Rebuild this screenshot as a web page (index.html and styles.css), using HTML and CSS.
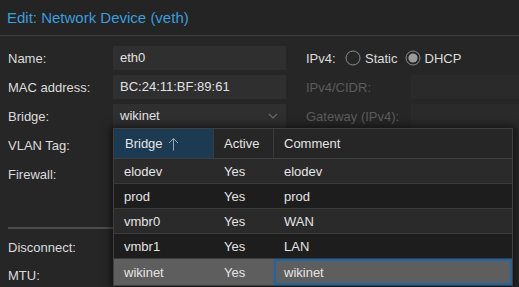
FILE: index.html
```html
<!DOCTYPE html>
<html>
<head>
<meta charset="utf-8">
<link rel="stylesheet" href="styles.css">
</head>
<body>
<div class="dialog">
  <div class="header"><span class="title">Edit: Network Device (veth)</span></div>
  <div class="form">
    <div class="col left">
      <div class="row"><span class="label">Name:</span><span class="field">eth0</span></div>
      <div class="row"><span class="label">MAC address:</span><span class="field">BC:24:11:BF:89:61</span></div>
      <div class="row"><span class="label">Bridge:</span><span class="field combo">wikinet<svg class="chev" width="10" height="6" viewBox="0 0 10 6"><polyline points="1,1 5,5 9,1" fill="none" stroke="#6a6a6a" stroke-width="1.2"/></svg></span></div>
      <div class="row"><span class="label">VLAN Tag:</span><span class="field"></span></div>
      <div class="row"><span class="label">Firewall:</span></div>
      <div class="spacer"></div>
      <div class="sep"></div>
      <div class="row r-disc"><span class="label">Disconnect:</span></div>
      <div class="row r-mtu"><span class="label">MTU:</span></div>
    </div>
    <div class="col right">
      <div class="row">
        <span class="label short">IPv4:</span>
        <span class="radio"><svg width="16" height="16" viewBox="0 0 16 16"><circle cx="8" cy="8" r="7" fill="none" stroke="#8a8a8a" stroke-width="1"/></svg>Static</span>
        <span class="radio"><svg width="16" height="16" viewBox="0 0 16 16"><circle cx="8" cy="8" r="7" fill="none" stroke="#8a8a8a" stroke-width="1"/><circle cx="8" cy="8" r="4.6" fill="#9a9a9a"/></svg>DHCP</span>
      </div>
      <div class="row"><span class="label dim">IPv4/CIDR:</span><span class="field off"></span></div>
      <div class="row"><span class="label dim">Gateway (IPv4):</span><span class="field off"></span></div>
    </div>
  </div>

  <div class="picker">
    <div class="grow ghead">
      <div class="c c1 sorted">Bridge<svg class="arrow" width="11" height="14" viewBox="0 0 11 14"><path d="M5.5 1.5 V13.5 M1 6 L5.5 1.5 L10 6" fill="none" stroke="#9aa6b0" stroke-width="1"/></svg></div>
      <div class="c c2">Active</div>
      <div class="c c3">Comment</div>
    </div>
    <div class="grow odd"><div class="c c1">elodev</div><div class="c c2">Yes</div><div class="c c3">elodev</div></div>
    <div class="grow even"><div class="c c1">prod</div><div class="c c2">Yes</div><div class="c c3">prod</div></div>
    <div class="grow odd"><div class="c c1">vmbr0</div><div class="c c2">Yes</div><div class="c c3">WAN</div></div>
    <div class="grow even"><div class="c c1">vmbr1</div><div class="c c2">Yes</div><div class="c c3">LAN</div></div>
    <div class="grow sel"><div class="c c1">wikinet</div><div class="c c2">Yes</div><div class="c c3 focus">wikinet</div></div>
  </div>
</div>
</body>
</html>
```

FILE: styles.css
```css
html, body {
  margin: 0;
  padding: 0;
  background: #262626;
}
body {
  font-family: "Liberation Sans", Arial, sans-serif;
  font-size: 13px;
  color: #dcdcdc;
  width: 519px;
  height: 287px;
  overflow: hidden;
}
.dialog {
  position: relative;
  width: 519px;
  height: 287px;
  overflow: hidden;
  background: #262626;
}
.header {
  height: 35px;
  border-bottom: 1px solid #3e3e3e;
  background: #242424;
  padding-left: 7px;
  display: flex;
  align-items: center;
}
.title {
  color: #3c9ddf;
  font-size: 15px;
}
.form {
  display: flex;
  gap: 20px;
  padding: 10px 0 0 8px;
}
.col {
  display: flex;
  flex-direction: column;
}
.left {
  width: 278px;
  flex: none;
}
.right {
  flex: none;
  width: 240px;
}
.row {
  display: flex;
  align-items: center;
  height: 24px;
  margin-bottom: 5px;
}
.label {
  width: 105px;
  flex: none;
  color: #dcdcdc;
}
.label.short {
  width: 39px;
}
.label.dim {
  color: #5c5c5c;
}
.field {
  flex: 1;
  height: 24px;
  line-height: 24px;
  background: #2f2f2f;
  color: #e2e2e2;
  padding-left: 7px;
  box-sizing: border-box;
  display: flex;
  align-items: center;
}
.field.off {
  background: #2a2a2a;
  flex: none;
  width: 130px;
}
.combo {
  justify-content: space-between;
  padding-right: 8px;
}
.chev {
  display: block;
}
.radio {
  display: flex;
  align-items: center;
  gap: 4px;
  margin-right: 7px;
  color: #dcdcdc;
}
.radio svg {
  display: block;
}
.spacer {
  height: 36px;
}
.sep {
  height: 2px;
  background: #4c4c4c;
  width: 200px;
}
.r-disc {
  margin-top: 6px;
}
.r-mtu {
  margin-top: -1px;
}

/* dropdown grid picker (overlay) */
.picker {
  position: absolute;
  left: 113px;
  top: 128px;
  width: 400px;
  height: 158px;
  box-sizing: border-box;
  border: 1px solid #404040;
  background: #262626;
  box-shadow: 0 0 8px 2px rgba(0, 0, 0, 0.55);
  color: #e4e4e4;
}
.grow {
  display: flex;
  height: 25px;
  box-sizing: border-box;
  border-bottom: 1px solid #3a3a3a;
}
.ghead {
  height: 30px;
  background: #262626;
  border-bottom: 1px solid #3e3e3e;
}
.c {
  display: flex;
  align-items: center;
  padding-left: 10px;
  box-sizing: border-box;
}
.c1 { width: 100px; }
.c2 { width: 60px; }
.c3 { flex: 1; }
.ghead .c1, .ghead .c2 {
  border-right: 1px solid #3a3a3a;
}
.ghead .c1 { padding-left: 11px; }
.sorted {
  background: #1c3a52;
}
.arrow {
  display: block;
  margin-left: 5px;
}
.odd { background: #2a2a2a; }
.even { background: #1d1d1d; }
.sel {
  background: #5e5e5e;
  border-bottom: none;
  height: 26px;
}
.focus {
  box-shadow: inset 0 0 0 2px #1b66a8;
}
```
